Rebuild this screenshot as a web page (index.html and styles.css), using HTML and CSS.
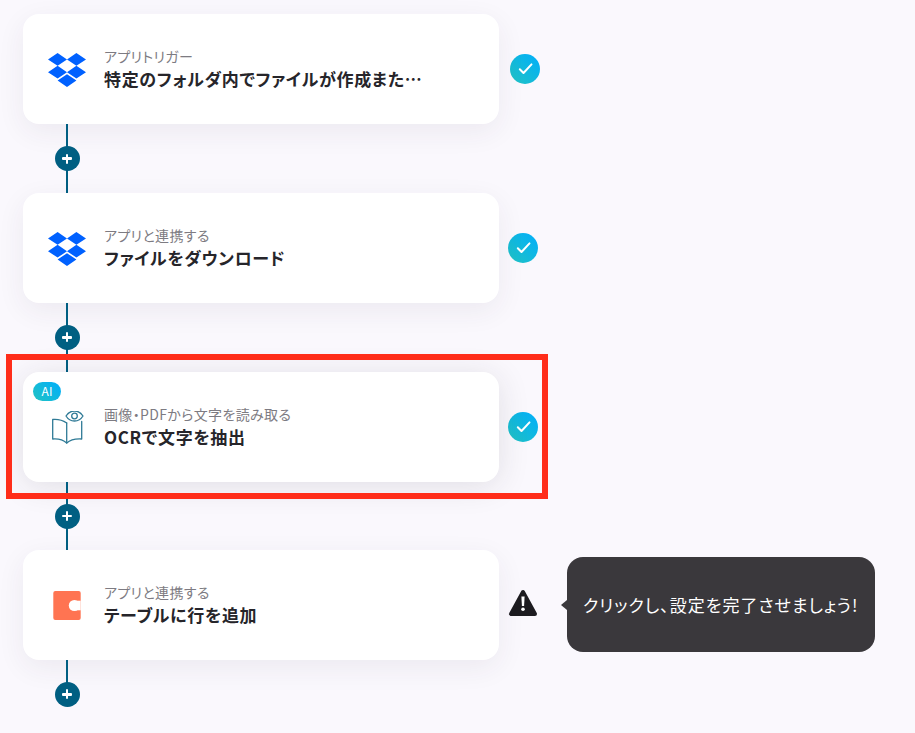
FILE: index.html
```html
<!DOCTYPE html>
<html lang="ja">
<head>
<meta charset="utf-8">
<title>フロー</title>
<link rel="stylesheet" href="styles.css">
</head>
<body>
<svg class="defs" width="0" height="0" aria-hidden="true">
  <defs>
    <linearGradient id="cg" x1="0" y1="1" x2="1" y2="0">
      <stop offset="0" stop-color="#22c3c2"/>
      <stop offset="1" stop-color="#00aefc"/>
    </linearGradient>
    <symbol id="dropbox" viewBox="0 0 38 36">
      <path fill="#0061ff" d="M9.600 0 0 6.400l9.600 6.400L19 6.400zM28.400 0 19 6.400l9.400 6.400L38 6.400zM0 19.200l9.600 6.400 9.400-6.400-9.400-6.400zM28.400 12.800 19 19.200l9.400 6.400 9.600-6.400zM9.600 27.600l9.400 6.400 9.400-6.400-9.400-6.400z"/>
    </symbol>
    <symbol id="check" viewBox="0 0 30 30">
      <circle cx="15" cy="15" r="15" fill="url(#cg)"/>
      <path d="M9.800 15.200l3.700 3.800 8-8.600" fill="none" stroke="#fff" stroke-width="2" stroke-linecap="round" stroke-linejoin="round"/>
    </symbol>
  </defs>
</svg>
<main class="flow">
  <section class="step">
    <article class="card">
      <svg class="icon"><use href="#dropbox"/></svg>
      <div class="text">
        <p class="sub">アプリトリガー</p>
        <p class="title">特定のフォルダ内でファイルが作成また…</p>
      </div>
    </article>
    <svg class="status status-first"><use href="#check"/></svg>
  </section>
  <div class="link"><span class="plus"></span></div>

  <section class="step">
    <article class="card">
      <svg class="icon"><use href="#dropbox"/></svg>
      <div class="text">
        <p class="sub">アプリと連携する</p>
        <p class="title">ファイルをダウンロード</p>
      </div>
    </article>
    <svg class="status"><use href="#check"/></svg>
  </section>
  <div class="link"><span class="plus"></span></div>

  <section class="step">
    <article class="card card-active">
      <span class="ai">AI</span>
      <svg class="icon" viewBox="0 0 38 36">
        <g fill="none" stroke="#2f7a96" stroke-width="1.300" stroke-linejoin="round" stroke-linecap="round">
          <path d="M18.700 12C15 9.500 10 8 4.700 8.500V28c5.500-.4 10.500.8 14 4 3.500-3.200 8.500-4.400 15-4V10.500"/>
          <path d="M18.700 12V32"/>
          <path d="M18 5C20 1.800 23.300 0 26.500 0S33 1.800 35 5c-2 3.200-5.300 5-8.500 5S20 8.200 18 5z"/>
          <circle cx="26.500" cy="5" r="2.800"/>
        </g>
      </svg>
      <div class="text">
        <p class="sub">画像・PDFから文字を読み取る</p>
        <p class="title">OCRで文字を抽出</p>
      </div>
    </article>
    <svg class="status"><use href="#check"/></svg>
  </section>
  <div class="link"><span class="plus"></span></div>

  <section class="step">
    <article class="card">
      <svg class="icon" viewBox="0 0 38 36">
        <rect x="5.300" y="2" width="27.400" height="29" rx="2" fill="#ff7452"/>
        <circle cx="26.300" cy="16.500" r="5.500" fill="#fff"/>
        <rect x="26.300" y="11.700" width="6.400" height="9.600" fill="#fff"/>
      </svg>
      <div class="text">
        <p class="sub">アプリと連携する</p>
        <p class="title">テーブルに行を追加</p>
      </div>
    </article>
    <svg class="status status-warn" viewBox="0 0 30 30">
      <path fill="#1d1c20" stroke="#1d1c20" stroke-width="4" stroke-linejoin="round" d="M15 3 3 25h24z"/>
      <path fill="#fff" d="M13.400 7.500h3.200l-.5 9.500h-2.200z"/>
      <circle cx="15" cy="20.200" r="1.800" fill="#fff"/>
    </svg>
    <div class="tooltip">クリックし、設定を完了させましょう!</div>
  </section>
  <div class="link link-last"><span class="plus"></span></div>
</main>
<div class="highlight"></div>
</body>
</html>
```
FILE: styles.css
```css
* { box-sizing: border-box; }

html, body { height: 100%; }

body {
  margin: 0;
  overflow: hidden;
  background: #faf8fd;
  font-family: "Noto Sans CJK JP", "Noto Sans", sans-serif;
  position: relative;
}

.defs { position: absolute; }

.flow {
  display: flex;
  flex-direction: column;
  padding: 14.300px 0 0 23px;
}

.step {
  display: flex;
  align-items: center;
  height: 110px;
}

.card {
  position: relative;
  display: flex;
  align-items: center;
  width: 476px;
  height: 110px;
  padding: 0 20px 0 25px;
  background: #fff;
  border-radius: 16px;
  box-shadow: 0 8px 28px rgba(50, 45, 70, 0.07);
}

.card-active {
  box-shadow: 0 4px 32px rgba(40, 40, 50, 0.12);
}

.icon {
  width: 38px;
  height: 36px;
  flex: none;
  margin-top: 4px;
}

.text {
  margin-left: 18px;
  min-width: 0;
}

.sub {
  margin: -1px 0 0;
  font-size: 14px;
  line-height: 20px;
  letter-spacing: 0.025em;
  font-feature-settings: "palt";
  color: #7d7b82;
}

.title {
  margin: 0;
  font-size: 17px;
  line-height: 25px;
  font-weight: 700;
  color: #26252a;
  letter-spacing: 0.04em;
  font-feature-settings: "palt";
  white-space: nowrap;
}

.ai {
  position: absolute;
  left: 10px;
  top: 10.500px;
  width: 28px;
  height: 18.500px;
  border-radius: 10px;
  background: linear-gradient(45deg, #22c3c2, #00aefc);
  color: #fff;
  font-size: 12px;
  line-height: 18.500px;
  text-align: center;
  font-weight: 400;
}

.status {
  width: 30px;
  height: 30px;
  flex: none;
  margin-left: 9px;
}

.status-first { margin-left: 11px; }

.status-warn { margin-top: -2px; }

.link {
  position: relative;
  height: 68.700px;
  margin-left: 43px;
  width: 2px;
  background: #005f82;
  display: flex;
  align-items: center;
  justify-content: center;
}

.link-last { height: 34px; }

.link-last .plus { margin-top: 34px; }

.plus {
  position: relative;
  flex: none;
  width: 25px;
  height: 25px;
  border-radius: 50%;
  background: #005f82;
}

.plus::before,
.plus::after {
  content: "";
  position: absolute;
  left: 50%;
  top: 50%;
  background: #fff;
  border-radius: 1px;
}

.plus::before {
  width: 10px;
  height: 2.500px;
  margin: -1.250px 0 0 -5px;
}

.plus::after {
  width: 2.500px;
  height: 10px;
  margin: -5px 0 0 -1.250px;
}

.tooltip {
  position: relative;
  flex: none;
  width: 308px;
  height: 95px;
  margin-left: 29px;
  margin-top: -1px;
  padding-left: 16px;
  display: flex;
  align-items: center;
  background: #3a383c;
  border-radius: 16px;
  color: #fff;
  font-size: 17px;
  letter-spacing: 1px;
  font-feature-settings: "palt";
  white-space: nowrap;
}

.tooltip::before {
  content: "";
  position: absolute;
  left: -6px;
  top: 50%;
  margin-top: -5px;
  border-style: solid;
  border-width: 5px 6px 5px 0;
  border-color: transparent #3a383c transparent transparent;
}

.highlight {
  position: absolute;
  left: 6px;
  top: 354px;
  width: 542px;
  height: 145px;
  border: 6px solid #ff2d1a;
}
```
